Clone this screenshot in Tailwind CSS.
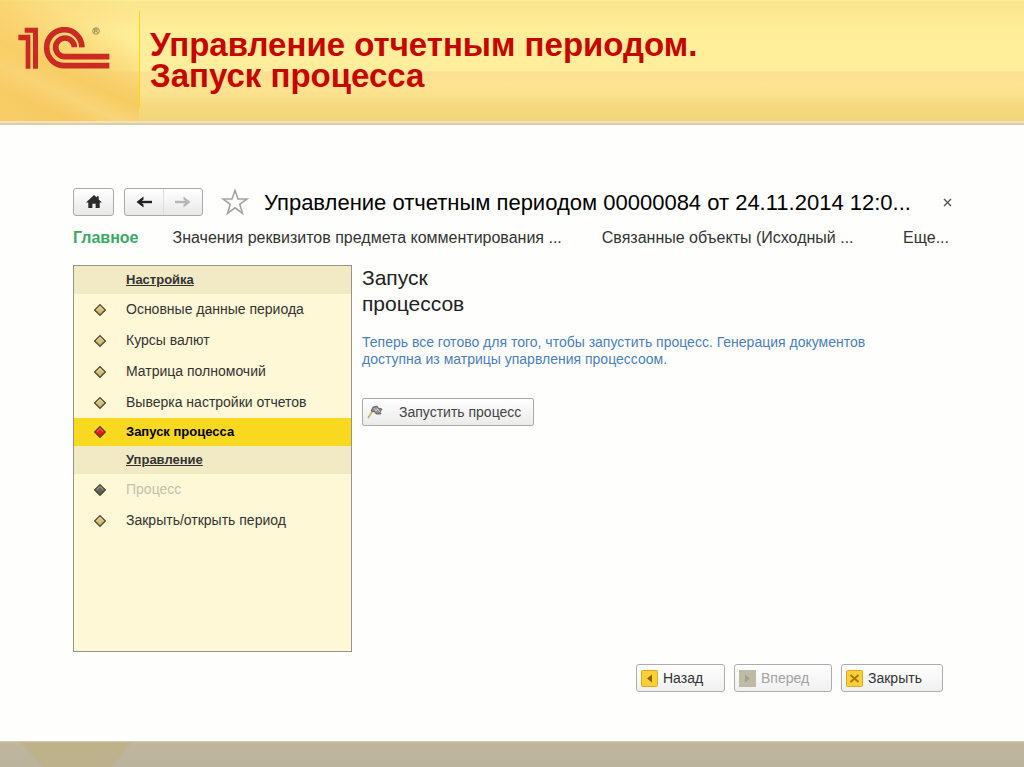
<!DOCTYPE html>
<html lang="ru">
<head>
<meta charset="utf-8">
<meta name="viewport" content="width=device-width, initial-scale=1">
<title>Управление отчетным периодом</title>
<script src="https://cdn.jsdelivr.net/npm/@tailwindcss/browser@4"></script>
</head>
<body class="flex min-h-screen flex-col bg-[#fefefd] font-['Liberation_Sans',Arial,sans-serif] text-[#333]">

<svg class="hidden" aria-hidden="true">
  <symbol id="gem" viewBox="0 0 12 12">
    <path d="M6 .6 11.4 6 6 11.4.6 6Z" fill="currentColor" stroke="#4c4528" stroke-width="1.2"/>
    <path d="M2.6 5.8 6 2.5 9.4 5.8" fill="none" stroke="#fff" stroke-opacity=".45" stroke-width="1"/>
    <path d="M2.6 6.4 6 9.7 9.4 6.4" fill="none" stroke="#000" stroke-opacity=".18" stroke-width="1"/>
  </symbol>
</svg>

<!-- Slide header -->
<header class="border-b-2 border-[#d9ccb0] bg-[#f3e2b4] pb-[2px]">
  <div class="flex h-[121px] bg-[linear-gradient(to_bottom,#fff39a_0px,#fbe68f_2px,#fde993_18px,#ffed99_28px,#ffee9b_71px,#fae194_72px,#fee390_84px,#fbe08e_96px,#f5da7f_104px,#f0d678_121px)]">
    <div class="flex w-[139px] shrink-0 bg-[linear-gradient(to_right,#f9d06a99,#f9d06a00),linear-gradient(25deg,#f6c965_0%,#f5c65c_18%,#f8d67c_30%,#f6cb60_42%,#fbdf8500_75%)] pt-[27px] pl-[18px]">
      <svg class="h-[43px] w-[92px]" viewBox="53 82 276 129" role="img" aria-label="1С">
        <g fill="#cb2a23"><path d="M54 105H90V207H76V122H54Z"/><path d="M73 84H113V207H98V99H73Z"/></g>
        <g fill="none" stroke="#cb2a23" stroke-width="17">
          <path d="M245 143A53 54 0 1 0 192 198H327"/>
          <path d="M222 143A28 28 0 1 0 194 171H327"/>
        </g>
        <circle cx="287" cy="94" r="10" fill="none" stroke="#7a6238" stroke-width="2"/>
        <path d="M283 100V88H288A3 3 0 0 1 288 94H283M288 94L292 100" fill="none" stroke="#7a6238" stroke-width="2"/>
      </svg>
    </div>
    <div class="mt-[11px] mb-[13px] w-px shrink-0 bg-[#fbd80c]"></div>
    <h1 class="pt-[29px] pl-[10px] text-[33px] leading-[31px] font-bold text-[#c60400]">Управление отчетным периодом.<br>Запуск процесса</h1>
  </div>
</header>

<main class="flex flex-1 flex-col pr-[71px] pl-[73px]">
  <!-- Form title bar -->
  <div class="mt-[62px] flex h-[30px] items-center">
    <button type="button" aria-label="Домой" class="flex h-[28px] w-[41px] items-center justify-center rounded-[3px] border border-[#aaa] bg-linear-to-b from-white to-[#e8e8e8]">
      <svg class="size-4" viewBox="0 0 16 16" fill="#2b2b2b"><path d="M8 1 0 8.6H2.3V14H6.4V9.8H9.6V14H13.7V8.6H16L12.7 5.4V2.2H10.8V3.6Z"/></svg>
    </button>
    <div class="ml-[10px] flex h-[28px] w-[79px] rounded-[3px] border border-[#aaa] bg-linear-to-b from-white to-[#e8e8e8]">
      <button type="button" aria-label="Назад по истории" class="flex flex-1 items-center justify-center border-r border-[#ddd]">
        <svg class="size-4" viewBox="0 0 16 16" fill="none" stroke="#222" stroke-width="2.4"><path d="M16 8H3"/><path d="M7.5 2.5 .5 8 7.5 13.5V10.5L4.5 8 7.5 5.5Z" fill="#222" stroke="none"/></svg>
      </button>
      <button type="button" aria-label="Вперед по истории" disabled class="flex flex-1 items-center justify-center">
        <svg class="size-4" viewBox="0 0 16 16" fill="none" stroke="#b5b5b5" stroke-width="2.4"><path d="M0 8H13"/><path d="M8.5 2.5 15.5 8 8.5 13.5V10.5L11.5 8 8.5 5.5Z" fill="#b5b5b5" stroke="none"/></svg>
      </button>
    </div>
    <button type="button" aria-label="Добавить в избранное" class="ml-[18px]">
      <svg class="size-[28px]" viewBox="0 0 28 28" fill="none" stroke="#a3a3a3" stroke-width="1.6"><path d="M14 2.5 17 11H26L18.8 16.3 21.5 25.5 14 19.8 6.5 25.5 9.2 16.3 2 11H11Z"/></svg>
    </button>
    <h2 class="ml-[15px] flex-1 text-[22px] whitespace-nowrap text-black">Управление отчетным периодом 00000084 от 24.11.2014 12:0...</h2>
    <button type="button" aria-label="Закрыть форму" class="mr-[1px]">
      <svg class="size-[9px]" viewBox="0 0 9 9" stroke="#555" stroke-width="1.4"><path d="M1 1 8 8M8 1 1 8"/></svg>
    </button>
  </div>

  <!-- Form navigation -->
  <nav class="mt-[10px] flex items-center text-[16px] leading-[22px] whitespace-nowrap">
    <a href="#" class="mr-[34px] text-[16px] font-bold text-[#3aa966]">Главное</a>
    <a href="#" class="mr-10">Значения реквизитов предмета комментирования ...</a>
    <a href="#">Связанные объекты (Исходный ...</a>
    <a href="#" class="ml-auto pr-[4px]">Еще...</a>
  </nav>

  <div class="mt-[16px] flex">
    <!-- Steps -->
    <aside class="h-[387px] w-[279px] shrink-0 border border-[#96948a] bg-[#fff8d6] text-[14px]">
      <h3 class="flex h-[28px] items-center bg-[#f2eac5] pl-[52px] text-[13px] font-bold underline">Настройка</h3>
      <ul>
        <li><a href="#" class="flex h-[31px] items-center gap-5 pl-[20px]"><svg class="size-3 text-[#d6c277]"><use href="#gem"/></svg>Основные данные периода</a></li>
        <li><a href="#" class="flex h-[31px] items-center gap-5 pl-[20px]"><svg class="size-3 text-[#d6c277]"><use href="#gem"/></svg>Курсы валют</a></li>
        <li><a href="#" class="flex h-[31px] items-center gap-5 pl-[20px]"><svg class="size-3 text-[#d6c277]"><use href="#gem"/></svg>Матрица полномочий</a></li>
        <li><a href="#" class="flex h-[31px] items-center gap-5 pl-[20px]"><svg class="size-3 text-[#d6c277]"><use href="#gem"/></svg>Выверка настройки отчетов</a></li>
        <li><a href="#" aria-current="step" class="flex h-[28px] items-center gap-5 bg-[#f9d920] pl-[20px] text-[13px] font-bold text-black"><svg class="size-3 text-[#f01818]"><use href="#gem"/></svg>Запуск процесса</a></li>
      </ul>
      <h3 class="flex h-[28px] items-center bg-[#f2eac5] pl-[52px] text-[13px] font-bold underline">Управление</h3>
      <ul>
        <li class="flex h-[31px] items-center gap-5 pl-[20px] text-[#c4c0ae]"><svg class="size-3 text-[#666]"><use href="#gem"/></svg>Процесс</li>
        <li><a href="#" class="flex h-[31px] items-center gap-5 pl-[20px]"><svg class="size-3 text-[#d6c277]"><use href="#gem"/></svg>Закрыть/открыть период</a></li>
      </ul>
    </aside>

    <!-- Step content -->
    <section class="ml-[10px] flex-1">
      <h2 class="text-[21px] leading-[26px] text-[#222]">Запуск<br>процессов</h2>
      <p class="mt-[17px] text-[14px] leading-[17px] text-[#4a80b8]">Теперь все готово для того, чтобы запустить процесс. Генерация документов<br>доступна из матрицы упарвления процессоом.</p>
      <button type="button" class="mt-[30px] flex h-[28px] w-[172px] items-center gap-[16px] rounded-[2px] border border-[#a8a8a8] bg-linear-to-b from-white to-[#ebebeb] pl-[4px] text-[14px] whitespace-nowrap text-[#444]">
        <svg class="h-4 w-4 shrink-0" viewBox="0 0 16 16"><path d="M1 14 7 5" stroke="#c8ab6a" stroke-width="1.6"/><path d="M6 3 10 2 11 4 15 5 13 8 14 10 9 10 8 8 4 7Z" fill="#8c8c88" stroke="#555" stroke-width=".8"/><path d="M7 4.5 10 7M10 4 12.5 8M8 7 11 5" stroke="#ddd" stroke-width=".8"/></svg>
        Запустить процесс
      </button>
    </section>
  </div>

  <!-- Wizard buttons -->
  <div class="mt-[12px] mb-[20px] flex justify-end gap-[9px] pr-[10px] text-[14px]">
    <button type="button" class="flex h-[28px] w-[89px] items-center gap-[5px] rounded-[3px] border border-[#adadad] bg-linear-to-b from-white to-[#f0f0f0] pl-[4px]">
      <svg class="size-[17px]" viewBox="0 0 17 17"><rect x=".5" y=".5" width="16" height="16" rx="1" fill="#fbd034" stroke="#dca82a"/><path d="M11 4.5V12.5L6 8.5Z" fill="#8a6114"/></svg>
      Назад
    </button>
    <button type="button" disabled class="flex h-[28px] w-[98px] items-center gap-[5px] rounded-[3px] border border-[#adadad] bg-linear-to-b from-white to-[#f0f0f0] pl-[4px] text-[#a3a3a3]">
      <svg class="size-[17px]" viewBox="0 0 17 17"><rect width="17" height="17" fill="#bdbba4"/><path d="M6 4.5V12.5L11 8.5Z" fill="#a3a18c"/></svg>
      Вперед
    </button>
    <button type="button" class="flex h-[28px] w-[102px] items-center gap-[5px] rounded-[3px] border border-[#adadad] bg-linear-to-b from-white to-[#f0f0f0] pl-[4px]">
      <svg class="size-[17px]" viewBox="0 0 17 17"><rect x=".5" y=".5" width="16" height="16" rx="1" fill="#fbd034" stroke="#dca82a"/><path d="M4.5 5 12.5 12M12.5 5 4.5 12" stroke="#a8781c" stroke-width="2"/></svg>
      Закрыть
    </button>
  </div>
</main>

<footer class="h-[26px] border-t border-[#d3cbb6] bg-linear-to-b from-[#bfb69c] to-[#bbb39d]">
  <svg class="h-full w-[140px]" viewBox="0 0 140 25" preserveAspectRatio="none" aria-hidden="true"><path d="M20 0H132L112 25H42Z" fill="#bfae72" opacity=".4"/></svg>
</footer>
</body>
</html>
